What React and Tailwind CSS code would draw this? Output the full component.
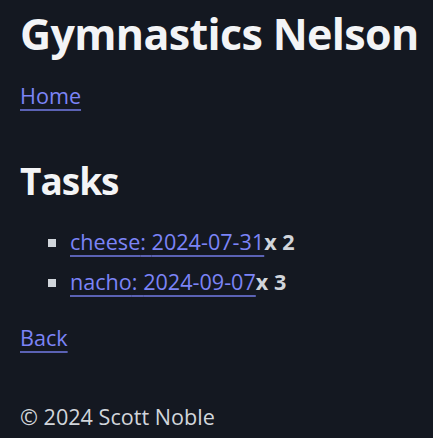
export default function App() {
  const tasks = [
    { name: "cheese", date: "2024-07-31", count: 2 },
    { name: "nacho", date: "2024-09-07", count: 3 },
  ];

  return (
    <div className="min-h-screen bg-[#141821] text-[#e5e7eb] px-5 pt-[8px] pb-5 font-['Open_Sans',sans-serif] text-[21.6px] leading-[33px]">
      <h1 className="whitespace-nowrap text-[43px] font-bold leading-[52px] tracking-[-0.65px] text-[#f3f4f6]">Gymnastics Nelson</h1>
      <nav className="mt-[19px]">
        <a href="#" className="text-[#7c84f7] underline decoration-[#5b62b4] underline-offset-[5px]">Home</a>
      </nav>
      <main className="mt-[47px]">
        <h2 className="text-[37px] font-bold leading-[1.2] tracking-[-1px] text-[#f3f4f6]">Tasks</h2>
        <ul className="mt-[22px] ml-[25px] list-[square] pl-[25px] space-y-[7px] marker:text-[#d1d5db]">
          {tasks.map((t) => (
            <li key={t.name}>
              <a href="#" className="text-[#7c84f7] underline decoration-[#5b62b4] underline-offset-[5px]">
                {t.name}: {t.date}
              </a>
              <span className="font-bold text-[#d1d5db]">x {t.count}</span>
            </li>
          ))}
        </ul>
        <div className="mt-[23px]">
          <a href="#" className="text-[#7c84f7] underline decoration-[#5b62b4] underline-offset-[5px]">Back</a>
        </div>
      </main>
      <footer className="mt-[46px] text-[#d1d5db]">© 2024 Scott Noble</footer>
    </div>
  );
}
